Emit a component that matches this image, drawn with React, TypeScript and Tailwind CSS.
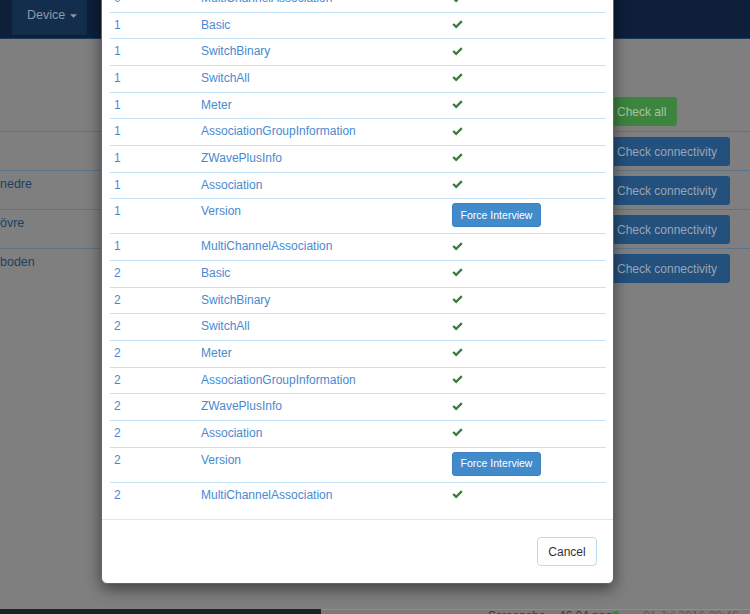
import React from "react";

type Row = { ep: string; name: string; force?: boolean };

const names = [
  "Basic",
  "SwitchBinary",
  "SwitchAll",
  "Meter",
  "AssociationGroupInformation",
  "ZWavePlusInfo",
  "Association",
  "Version",
  "MultiChannelAssociation",
];

const rows: Row[] = [
  { ep: "0", name: "MultiChannelAssociation" },
  ...["1", "2"].flatMap((ep) =>
    names.map((n) => ({ ep, name: n, force: n === "Version" }))
  ),
];

function Check() {
  return (
    <svg width="11" height="9" viewBox="0 0 12 10" className="mt-[3.5px]">
      <path d="M0.3 5.3 L2.1 3.5 L4.5 5.9 L9.9 0.4 L11.7 2.2 L4.5 9.4 Z" fill="#3a7d3b" />
    </svg>
  );
}

export default function App() {
  return (
    <div
      className="relative w-[750px] h-[614px] overflow-hidden bg-[#7f7f7f] flex flex-col"
      style={{ fontFamily: '"Liberation Sans", Arial, sans-serif' }}
    >
      {/* navbar (dimmed) */}
      <div className="h-[39px] bg-[#0e1f3a] border-b border-[#1b3a5a] flex pl-[12px] shrink-0">
        <div className="w-[75px] h-[35px] bg-[#132e4d] flex items-start pt-[7px] pl-[15px] gap-[5px] text-[12.5px] leading-[17px] text-[#8c99a8]">
          <span>Device</span>
          <svg width="7" height="4" viewBox="0 0 8 4" className="mt-[7px]">
            <path d="M0 0 L8 0 L4 4 Z" fill="#8c99a8" />
          </svg>
        </div>
      </div>

      {/* page content (dimmed) */}
      <div className="flex flex-col">
        <div className="h-[92px] flex justify-end pr-[73px]">
          <div className="mt-[58px] h-[29px] w-[73px] rounded-[3px] bg-[#3d843e] text-[12px] text-[#a9c4a9] flex items-center pl-[13px]">
            Check all
          </div>
        </div>
        {["", "nedre", "övre", "boden"].map((t, i) => (
          <div key={i} className="h-[39px] border-t border-[#5c7488] flex justify-between">
            <div className="pt-[5px] text-[12.5px] leading-[17px] text-[#1d3f62]">{t}</div>
            <div className="w-[146px] pt-[5px]">
              <div className="h-[29px] w-[126px] rounded-[3px] bg-[#24507d] text-[12px] text-[#9aa6b3] flex items-center pl-[13px]">
                Check connectivity
              </div>
            </div>
          </div>
        ))}
      </div>

      {/* bottom strip */}
      <div className="mt-auto h-[5px] flex overflow-hidden">
        <div className="w-[321px] bg-[#1a2224]" />
        <div className="flex-1 bg-[#7a7a7a] border-t border-[#8d8d8d] relative">
          <span className="absolute left-[167px] top-[0px] text-[12px] leading-[12px] text-[#3a3a3a]">Screensho....46.04.png</span>
          <span className="absolute left-[292px] top-[1px] w-[6px] h-[6px] rounded-full bg-[#2c8a2c]" />
          <span className="absolute left-[322px] top-[0px] text-[12px] leading-[12px] text-[#5a5a5a]">01 Jul 2016 08:46</span>
        </div>
      </div>

      {/* modal */}
      <div className="absolute left-[101px] top-[-16px] w-[513px] bg-white border border-[#666] rounded-b-[6px] shadow-[0_5px_15px_rgba(0,0,0,0.5)]">
        <div className="pl-[8px] pr-[7px] pb-[11px]">
          {rows.map((r, i) => (
            <div
              key={i}
              className={
                "flex text-[12px] leading-[17px] text-[#4a89d0] " +
                (i === 0 ? "border-t border-transparent " : "border-t border-[#c4e3f6] ") +
                (r.force ? "h-[35px]" : "h-[26.67px]")
              }
            >
              <div className="w-[87px] pl-[4px] pt-[4px]">{r.ep}</div>
              <div className="w-[251px] pl-[4px] pt-[4px]">{r.name}</div>
              <div className="flex-1 pl-[4px] pt-[4px]">
                {r.force ? (
                  <div className="h-[24px] w-[89px] rounded-[3px] bg-[#428bca] border border-[#3b80c0] text-white text-[10.5px] flex items-center justify-center">
                    Force Interview
                  </div>
                ) : (
                  <Check />
                )}
              </div>
            </div>
          ))}
        </div>
        <div className="border-t border-[#e5e5e5] px-[16px] pt-[17px] pb-[17px] flex justify-end">
          <div className="h-[29px] w-[60px] rounded-[4px] border border-[#b9dcef] bg-white text-[12px] text-[#333] flex items-center justify-center">
            Cancel
          </div>
        </div>
      </div>
    </div>
  );
}
